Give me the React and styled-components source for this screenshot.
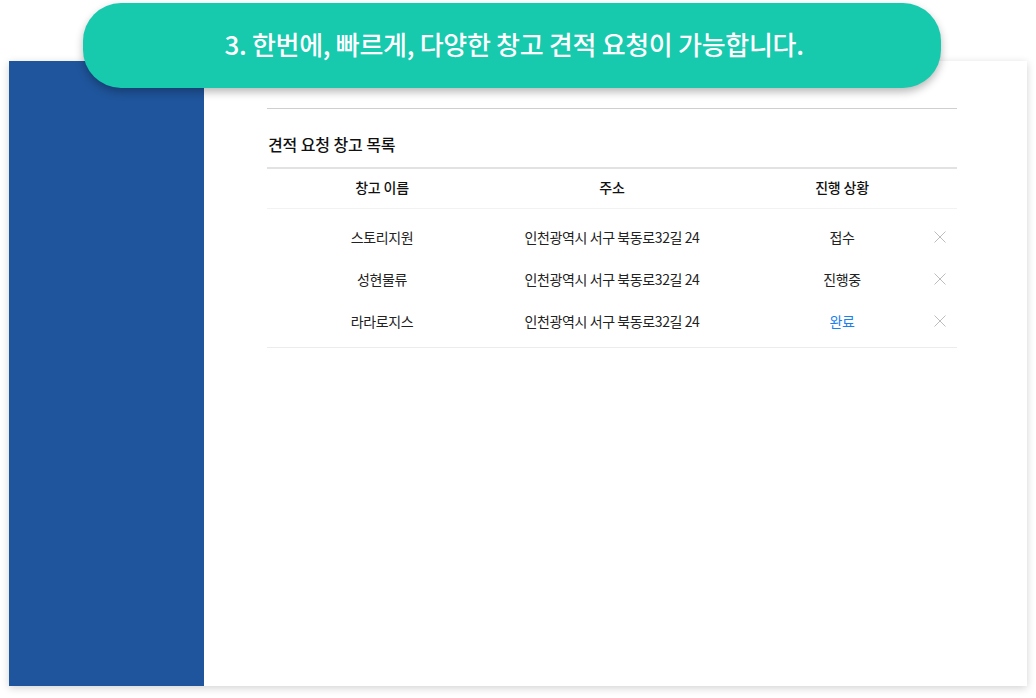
import React from "react";
import styled, { createGlobalStyle } from "styled-components";

const Global = createGlobalStyle`
  html, body { margin: 0; padding: 0; background: #ffffff; }
  body { font-family: "Noto Sans CJK KR", "Noto Sans", sans-serif; color: #111; }
  * { box-sizing: border-box; }
`;

const Page = styled.div`
  width: 1036px;
  height: 698px;
  padding: 3px 9px 0 9px;
  overflow: hidden;
`;

const Banner = styled.div`
  position: relative;
  z-index: 2;
  height: 85px;
  margin: 0 86px -27px 74px;
  border-radius: 38px;
  background: #17c9ad;
  box-shadow: 0 4px 8px rgba(0, 0, 0, 0.28);
  display: flex;
  align-items: center;
  justify-content: center;
  padding: 0 0 4px 4px;
  color: #fff;
  font-size: 26px;
  font-weight: 500;
  letter-spacing: -0.3px;
`;

const Panel = styled.div`
  height: 625px;
  display: flex;
  background: #fff;
  box-shadow: 0 2px 8px rgba(0, 0, 0, 0.18);
`;

const Sidebar = styled.aside`
  width: 195px;
  flex: none;
  background: #1f559c;
`;

const Main = styled.main`
  flex: 1;
  padding: 47px 70px 0 63px;
`;

const TopRule = styled.hr`
  margin: 0;
  border: 0;
  border-top: 1px solid #cfcfcf;
`;

const Title = styled.h2`
  margin: 0;
  padding: 24px 0 12px 1px;
  font-size: 16px;
  line-height: 22px;
  font-weight: 500;
  letter-spacing: -0.1px;
  color: #111;
`;

const Table = styled.div`
  border-top: 2px solid #e2e2e2;
  border-bottom: 1px solid #ececec;
`;

const HeadRow = styled.div`
  display: grid;
  grid-template-columns: 230px 230px 230px;
  height: 40px;
  padding-bottom: 3px;
  align-items: center;
  border-bottom: 1px solid #f2f2f2;
  font-size: 14px;
  font-weight: 500;
  letter-spacing: -0.2px;
`;

const Body = styled.div`
  padding: 7px 0 5px;
`;

const Row = styled.div`
  display: grid;
  grid-template-columns: 230px 230px 230px;
  height: 42px;
  padding-bottom: 1px;
  align-items: center;
  font-size: 14px;
  letter-spacing: -0.4px;
  color: #222;
`;

const Cell = styled.div`
  grid-row: 1;
  grid-column: ${(p) => p.$col};
  text-align: center;
  color: ${(p) => (p.$accent ? "#1a7ff0" : "inherit")};
`;

const Remove = styled.button`
  grid-row: 1;
  grid-column: 3;
  justify-self: end;
  margin-right: 11px;
  width: 12px;
  height: 12px;
  padding: 0;
  border: 0;
  background: none;
  display: flex;
  cursor: pointer;
`;

const XIcon = () => (
  <svg width="12" height="12" viewBox="0 0 12 12">
    <path d="M0.5 0.5 L11.5 11.5 M11.5 0.5 L0.5 11.5" stroke="#bdbdbd" strokeWidth="1" />
  </svg>
);

const rows = [
  { name: "스토리지원", addr: "인천광역시 서구 북동로32길 24", status: "접수" },
  { name: "성현물류", addr: "인천광역시 서구 북동로32길 24", status: "진행중" },
  { name: "라라로지스", addr: "인천광역시 서구 북동로32길 24", status: "완료", done: true },
];

export default function App() {
  return (
    <Page>
      <Global />
      <Banner>3. 한번에, 빠르게, 다양한 창고 견적 요청이 가능합니다.</Banner>
      <Panel>
        <Sidebar />
        <Main>
          <TopRule />
          <Title>견적 요청 창고 목록</Title>
          <Table>
            <HeadRow>
              <Cell $col={1}>창고 이름</Cell>
              <Cell $col={2}>주소</Cell>
              <Cell $col={3}>진행 상황</Cell>
            </HeadRow>
            <Body>
              {rows.map((r) => (
                <Row key={r.name}>
                  <Cell $col={1}>{r.name}</Cell>
                  <Cell $col={2}>{r.addr}</Cell>
                  <Cell $col={3} $accent={r.done}>{r.status}</Cell>
                  <Remove aria-label="삭제">
                    <XIcon />
                  </Remove>
                </Row>
              ))}
            </Body>
          </Table>
        </Main>
      </Panel>
    </Page>
  );
}
